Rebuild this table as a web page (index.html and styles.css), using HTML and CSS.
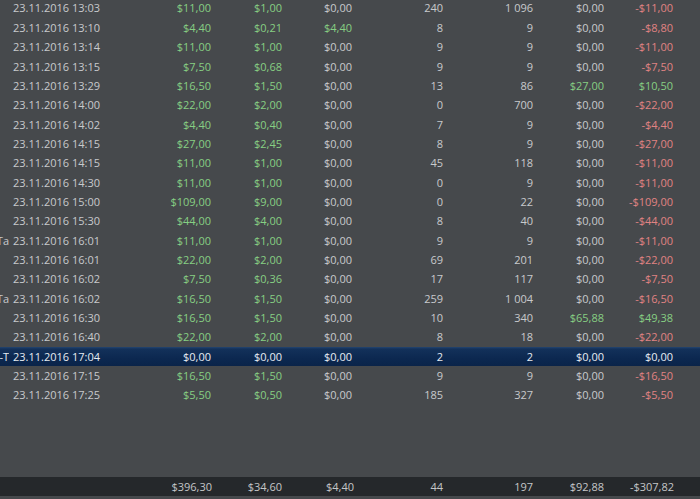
FILE: index.html
```html
<!DOCTYPE html>
<html>
<head>
<meta charset="utf-8">
<link rel="stylesheet" href="styles.css">
</head>
<body>
<div class="grid">
  <div class="rows">
    <div class="row"><span class="clip"></span><span class="date">23.11.2016 13:03</span><span class="num g">$11,00</span><span class="num g">$1,00</span><span class="num">$0,00</span><span class="num">240</span><span class="num">1 096</span><span class="num">$0,00</span><span class="num r">-$11,00</span></div>
    <div class="row"><span class="clip"></span><span class="date">23.11.2016 13:10</span><span class="num g">$4,40</span><span class="num g">$0,21</span><span class="num g">$4,40</span><span class="num">8</span><span class="num">9</span><span class="num">$0,00</span><span class="num r">-$8,80</span></div>
    <div class="row"><span class="clip"></span><span class="date">23.11.2016 13:14</span><span class="num g">$11,00</span><span class="num g">$1,00</span><span class="num">$0,00</span><span class="num">9</span><span class="num">9</span><span class="num">$0,00</span><span class="num r">-$11,00</span></div>
    <div class="row"><span class="clip"></span><span class="date">23.11.2016 13:15</span><span class="num g">$7,50</span><span class="num g">$0,68</span><span class="num">$0,00</span><span class="num">9</span><span class="num">9</span><span class="num">$0,00</span><span class="num r">-$7,50</span></div>
    <div class="row"><span class="clip"></span><span class="date">23.11.2016 13:29</span><span class="num g">$16,50</span><span class="num g">$1,50</span><span class="num">$0,00</span><span class="num">13</span><span class="num">86</span><span class="num g">$27,00</span><span class="num g">$10,50</span></div>
    <div class="row"><span class="clip"></span><span class="date">23.11.2016 14:00</span><span class="num g">$22,00</span><span class="num g">$2,00</span><span class="num">$0,00</span><span class="num">0</span><span class="num">700</span><span class="num">$0,00</span><span class="num r">-$22,00</span></div>
    <div class="row"><span class="clip"></span><span class="date">23.11.2016 14:02</span><span class="num g">$4,40</span><span class="num g">$0,40</span><span class="num">$0,00</span><span class="num">7</span><span class="num">9</span><span class="num">$0,00</span><span class="num r">-$4,40</span></div>
    <div class="row"><span class="clip"></span><span class="date">23.11.2016 14:15</span><span class="num g">$27,00</span><span class="num g">$2,45</span><span class="num">$0,00</span><span class="num">8</span><span class="num">9</span><span class="num">$0,00</span><span class="num r">-$27,00</span></div>
    <div class="row"><span class="clip"></span><span class="date">23.11.2016 14:15</span><span class="num g">$11,00</span><span class="num g">$1,00</span><span class="num">$0,00</span><span class="num">45</span><span class="num">118</span><span class="num">$0,00</span><span class="num r">-$11,00</span></div>
    <div class="row"><span class="clip"></span><span class="date">23.11.2016 14:30</span><span class="num g">$11,00</span><span class="num g">$1,00</span><span class="num">$0,00</span><span class="num">0</span><span class="num">9</span><span class="num">$0,00</span><span class="num r">-$11,00</span></div>
    <div class="row"><span class="clip"></span><span class="date">23.11.2016 15:00</span><span class="num g">$109,00</span><span class="num g">$9,00</span><span class="num">$0,00</span><span class="num">0</span><span class="num">22</span><span class="num">$0,00</span><span class="num r">-$109,00</span></div>
    <div class="row"><span class="clip"></span><span class="date">23.11.2016 15:30</span><span class="num g">$44,00</span><span class="num g">$4,00</span><span class="num">$0,00</span><span class="num">8</span><span class="num">40</span><span class="num">$0,00</span><span class="num r">-$44,00</span></div>
    <div class="row"><span class="clip"><span>Ta</span></span><span class="date">23.11.2016 16:01</span><span class="num g">$11,00</span><span class="num g">$1,00</span><span class="num">$0,00</span><span class="num">9</span><span class="num">9</span><span class="num">$0,00</span><span class="num r">-$11,00</span></div>
    <div class="row"><span class="clip"></span><span class="date">23.11.2016 16:01</span><span class="num g">$22,00</span><span class="num g">$2,00</span><span class="num">$0,00</span><span class="num">69</span><span class="num">201</span><span class="num">$0,00</span><span class="num r">-$22,00</span></div>
    <div class="row"><span class="clip"></span><span class="date">23.11.2016 16:02</span><span class="num g">$7,50</span><span class="num g">$0,36</span><span class="num">$0,00</span><span class="num">17</span><span class="num">117</span><span class="num">$0,00</span><span class="num r">-$7,50</span></div>
    <div class="row"><span class="clip"><span>Ta</span></span><span class="date">23.11.2016 16:02</span><span class="num g">$16,50</span><span class="num g">$1,50</span><span class="num">$0,00</span><span class="num">259</span><span class="num">1 004</span><span class="num">$0,00</span><span class="num r">-$16,50</span></div>
    <div class="row"><span class="clip"></span><span class="date">23.11.2016 16:30</span><span class="num g">$16,50</span><span class="num g">$1,50</span><span class="num">$0,00</span><span class="num">10</span><span class="num">340</span><span class="num g">$65,88</span><span class="num g">$49,38</span></div>
    <div class="row"><span class="clip"></span><span class="date">23.11.2016 16:40</span><span class="num g">$22,00</span><span class="num g">$2,00</span><span class="num">$0,00</span><span class="num">8</span><span class="num">18</span><span class="num">$0,00</span><span class="num r">-$22,00</span></div>
    <div class="row sel"><span class="clip"><span>-T</span></span><span class="date">23.11.2016 17:04</span><span class="num">$0,00</span><span class="num">$0,00</span><span class="num">$0,00</span><span class="num">2</span><span class="num">2</span><span class="num">$0,00</span><span class="num">$0,00</span></div>
    <div class="row"><span class="clip"></span><span class="date">23.11.2016 17:15</span><span class="num g">$16,50</span><span class="num g">$1,50</span><span class="num">$0,00</span><span class="num">9</span><span class="num">9</span><span class="num">$0,00</span><span class="num r">-$16,50</span></div>
    <div class="row"><span class="clip"></span><span class="date">23.11.2016 17:25</span><span class="num g">$5,50</span><span class="num g">$0,50</span><span class="num">$0,00</span><span class="num">185</span><span class="num">327</span><span class="num">$0,00</span><span class="num r">-$5,50</span></div>
  </div>
  <div class="totals">
    <span></span><span class="num">$396,30</span><span class="num">$34,60</span><span class="num">$4,40</span><span class="num">44</span><span class="num">197</span><span class="num">$92,88</span><span class="num">-$307,82</span>
  </div>
</div>
</body>
</html>
```
FILE: styles.css
```css
html, body {
  margin: 0;
  padding: 0;
  height: 100%;
  background: #46494c;
  overflow: hidden;
}
.grid {
  display: flex;
  flex-direction: column;
  height: 499px;
  font-family: "Open Sans", "Noto Sans", sans-serif;
  font-size: 11px;
  color: #c8cacc;
}
.rows {
  flex: 1;
  overflow: hidden;
}
.row {
  display: grid;
  grid-template-columns: 9px 112px 90px 71px 70px 91px 90px 71px 69px;
  height: 19.35px;
  align-items: center;
  white-space: nowrap;
}
.row:first-child {
  margin-top: -1.7px;
}
.clip {
  display: flex;
  justify-content: flex-end;
  overflow: hidden;
}
.clip span {
  flex: none;
}
.date {
  padding-left: 4px;
}
.num {
  text-align: right;
}
.g { color: #86cf83; }
.r { color: #e08383; }
.sel {
  background: linear-gradient(#24456f 0, #13315a 2px, #0c2850 60%, #0a2449 100%);
  color: #e6ebf2;
}
.totals {
  height: 19px;
  flex: none;
  background: #25282b;
  display: grid;
  grid-template-columns: 123px 89px 70px 72px 89px 90px 71px 70px;
  align-items: center;
  color: #c4c6c8;
  margin-bottom: 3px;
}
```
